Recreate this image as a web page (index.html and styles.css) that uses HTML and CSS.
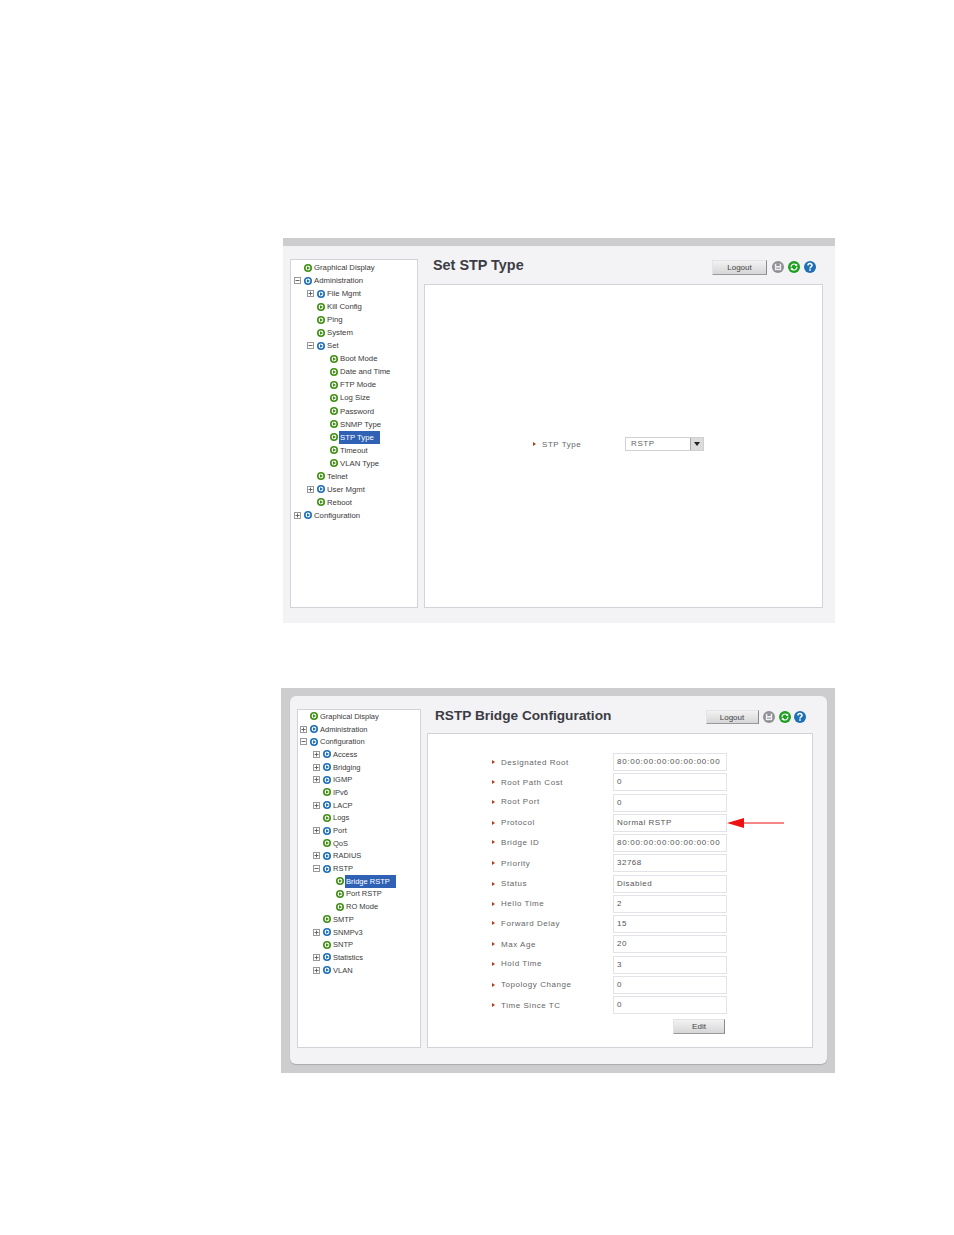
FILE: index.html
```html
<!DOCTYPE html>
<html lang="en">
<head>
  <meta charset="UTF-8">
  <meta name="viewport" content="width=device-width, initial-scale=1.0">
  <title>Set STP Type / RSTP Bridge Configuration</title>
  <link rel="stylesheet" href="styles.css">
</head>
<body>
  <!-- shared icons -->
  <svg class="icon-defs" width="0" height="0">
    <symbol id="leaf" viewBox="0 0 8 8">
      <circle cx="4" cy="4" r="4" fill="#3f8f14"/>
      <circle cx="4" cy="4" r="2.4" fill="#fff"/>
      <path d="M3 2.2L6 4 3 5.8z" fill="#3f8f14"/>
    </symbol>
    <symbol id="node" viewBox="0 0 8 8">
      <circle cx="4" cy="4" r="4" fill="#1c6fb5"/>
      <circle cx="4" cy="4" r="2.4" fill="#fff"/>
      <path d="M3 2.2L6 4 3 5.8z" fill="#1c6fb5"/>
    </symbol>
    <symbol id="plus" viewBox="0 0 7 7">
      <rect x=".5" y=".5" width="6" height="6" fill="#fff" stroke="#999"/>
      <path d="M1.5 3.5h4M3.5 1.5v4" stroke="#666"/>
    </symbol>
    <symbol id="minus" viewBox="0 0 7 7">
      <rect x=".5" y=".5" width="6" height="6" fill="#fff" stroke="#999"/>
      <path d="M1.5 3.5h4" stroke="#666"/>
    </symbol>
    <symbol id="save" viewBox="0 0 12 12">
      <circle cx="6" cy="6" r="6" fill="#8f9094"/>
      <rect x="2.8" y="2.8" width="6.4" height="6.4" fill="#f0f0f0"/>
      <rect x="4.3" y="2.8" width="3.4" height="2.2" fill="#8f9094"/>
      <rect x="3.9" y="6.4" width="4.2" height="1.6" fill="#b5b5b8"/>
    </symbol>
    <symbol id="refresh" viewBox="0 0 12 12">
      <circle cx="6" cy="6" r="6" fill="#1f9e22"/>
      <path d="M3 6.2A3 3 0 0 1 8.2 4M9 5.8A3 3 0 0 1 3.8 8" fill="none" stroke="#fff" stroke-width="1.2"/>
      <path d="M9.2 2.6v2.5H6.8zM2.8 9.4V6.9h2.4z" fill="#fff"/>
    </symbol>
    <symbol id="help" viewBox="0 0 12 12">
      <circle cx="6" cy="6" r="6" fill="#1f6fb4"/>
      <path d="M4 4.6A2 2 0 0 1 8 4.5C8 6 6 5.8 6 7.4" fill="none" stroke="#fff" stroke-width="1.5"/>
      <rect x="5.2" y="8.2" width="1.6" height="1.6" fill="#fff"/>
    </symbol>
  </svg>

  <!-- Set STP Type -->
  <div class="shot shot-stp">
    <div class="panel">
      <div class="tree">
        <div class="tree-row"><span class="slot"></span><svg class="bullet"><use href="#leaf"/></svg><span class="tree-label">Graphical Display</span></div>
        <div class="tree-row"><svg class="slot"><use href="#minus"/></svg><svg class="bullet"><use href="#node"/></svg><span class="tree-label">Administration</span></div>
        <div class="tree-row l1"><svg class="slot"><use href="#plus"/></svg><svg class="bullet"><use href="#node"/></svg><span class="tree-label">File Mgmt</span></div>
        <div class="tree-row l1"><span class="slot"></span><svg class="bullet"><use href="#leaf"/></svg><span class="tree-label">Kill Config</span></div>
        <div class="tree-row l1"><span class="slot"></span><svg class="bullet"><use href="#leaf"/></svg><span class="tree-label">Ping</span></div>
        <div class="tree-row l1"><span class="slot"></span><svg class="bullet"><use href="#leaf"/></svg><span class="tree-label">System</span></div>
        <div class="tree-row l1"><svg class="slot"><use href="#minus"/></svg><svg class="bullet"><use href="#node"/></svg><span class="tree-label">Set</span></div>
        <div class="tree-row l2"><span class="slot"></span><svg class="bullet"><use href="#leaf"/></svg><span class="tree-label">Boot Mode</span></div>
        <div class="tree-row l2"><span class="slot"></span><svg class="bullet"><use href="#leaf"/></svg><span class="tree-label">Date and Time</span></div>
        <div class="tree-row l2"><span class="slot"></span><svg class="bullet"><use href="#leaf"/></svg><span class="tree-label">FTP Mode</span></div>
        <div class="tree-row l2"><span class="slot"></span><svg class="bullet"><use href="#leaf"/></svg><span class="tree-label">Log Size</span></div>
        <div class="tree-row l2"><span class="slot"></span><svg class="bullet"><use href="#leaf"/></svg><span class="tree-label">Password</span></div>
        <div class="tree-row l2"><span class="slot"></span><svg class="bullet"><use href="#leaf"/></svg><span class="tree-label">SNMP Type</span></div>
        <div class="tree-row l2"><span class="slot"></span><svg class="bullet"><use href="#leaf"/></svg><span class="tree-label selected">STP Type</span></div>
        <div class="tree-row l2"><span class="slot"></span><svg class="bullet"><use href="#leaf"/></svg><span class="tree-label">Timeout</span></div>
        <div class="tree-row l2"><span class="slot"></span><svg class="bullet"><use href="#leaf"/></svg><span class="tree-label">VLAN Type</span></div>
        <div class="tree-row l1"><span class="slot"></span><svg class="bullet"><use href="#leaf"/></svg><span class="tree-label">Telnet</span></div>
        <div class="tree-row l1"><svg class="slot"><use href="#plus"/></svg><svg class="bullet"><use href="#node"/></svg><span class="tree-label">User Mgmt</span></div>
        <div class="tree-row l1"><span class="slot"></span><svg class="bullet"><use href="#leaf"/></svg><span class="tree-label">Reboot</span></div>
        <div class="tree-row"><svg class="slot"><use href="#plus"/></svg><svg class="bullet"><use href="#node"/></svg><span class="tree-label">Configuration</span></div>
      </div>
      <div class="content">
        <div class="header">
          <h2>Set STP Type</h2>
          <div class="actions">
            <button class="btn">Logout</button>
            <svg class="action-icon"><use href="#save"/></svg>
            <svg class="action-icon"><use href="#refresh"/></svg>
            <svg class="action-icon"><use href="#help"/></svg>
          </div>
        </div>
        <div class="main main-center">
          <div class="field">
            <span class="marker"></span>
            <span class="field-label field-label-short">STP Type</span>
            <div class="select"><span class="select-value">RSTP</span><span class="select-arrow"></span></div>
          </div>
        </div>
      </div>
    </div>
  </div>

  <!-- RSTP Bridge Configuration -->
  <div class="shot shot-rstp">
    <div class="panel">
      <div class="tree">
        <div class="tree-row"><span class="slot"></span><svg class="bullet"><use href="#leaf"/></svg><span class="tree-label">Graphical Display</span></div>
        <div class="tree-row"><svg class="slot"><use href="#plus"/></svg><svg class="bullet"><use href="#node"/></svg><span class="tree-label">Administration</span></div>
        <div class="tree-row"><svg class="slot"><use href="#minus"/></svg><svg class="bullet"><use href="#node"/></svg><span class="tree-label">Configuration</span></div>
        <div class="tree-row l1"><svg class="slot"><use href="#plus"/></svg><svg class="bullet"><use href="#node"/></svg><span class="tree-label">Access</span></div>
        <div class="tree-row l1"><svg class="slot"><use href="#plus"/></svg><svg class="bullet"><use href="#node"/></svg><span class="tree-label">Bridging</span></div>
        <div class="tree-row l1"><svg class="slot"><use href="#plus"/></svg><svg class="bullet"><use href="#node"/></svg><span class="tree-label">IGMP</span></div>
        <div class="tree-row l1"><span class="slot"></span><svg class="bullet"><use href="#leaf"/></svg><span class="tree-label">IPv6</span></div>
        <div class="tree-row l1"><svg class="slot"><use href="#plus"/></svg><svg class="bullet"><use href="#node"/></svg><span class="tree-label">LACP</span></div>
        <div class="tree-row l1"><span class="slot"></span><svg class="bullet"><use href="#leaf"/></svg><span class="tree-label">Logs</span></div>
        <div class="tree-row l1"><svg class="slot"><use href="#plus"/></svg><svg class="bullet"><use href="#node"/></svg><span class="tree-label">Port</span></div>
        <div class="tree-row l1"><span class="slot"></span><svg class="bullet"><use href="#leaf"/></svg><span class="tree-label">QoS</span></div>
        <div class="tree-row l1"><svg class="slot"><use href="#plus"/></svg><svg class="bullet"><use href="#node"/></svg><span class="tree-label">RADIUS</span></div>
        <div class="tree-row l1"><svg class="slot"><use href="#minus"/></svg><svg class="bullet"><use href="#node"/></svg><span class="tree-label">RSTP</span></div>
        <div class="tree-row l2"><span class="slot"></span><svg class="bullet"><use href="#leaf"/></svg><span class="tree-label selected">Bridge RSTP</span></div>
        <div class="tree-row l2"><span class="slot"></span><svg class="bullet"><use href="#leaf"/></svg><span class="tree-label">Port RSTP</span></div>
        <div class="tree-row l2"><span class="slot"></span><svg class="bullet"><use href="#leaf"/></svg><span class="tree-label">RO Mode</span></div>
        <div class="tree-row l1"><span class="slot"></span><svg class="bullet"><use href="#leaf"/></svg><span class="tree-label">SMTP</span></div>
        <div class="tree-row l1"><svg class="slot"><use href="#plus"/></svg><svg class="bullet"><use href="#node"/></svg><span class="tree-label">SNMPv3</span></div>
        <div class="tree-row l1"><span class="slot"></span><svg class="bullet"><use href="#leaf"/></svg><span class="tree-label">SNTP</span></div>
        <div class="tree-row l1"><svg class="slot"><use href="#plus"/></svg><svg class="bullet"><use href="#node"/></svg><span class="tree-label">Statistics</span></div>
        <div class="tree-row l1"><svg class="slot"><use href="#plus"/></svg><svg class="bullet"><use href="#node"/></svg><span class="tree-label">VLAN</span></div>
      </div>
      <div class="content">
        <div class="header">
          <h2>RSTP Bridge Configuration</h2>
          <div class="actions">
            <button class="btn">Logout</button>
            <svg class="action-icon"><use href="#save"/></svg>
            <svg class="action-icon"><use href="#refresh"/></svg>
            <svg class="action-icon"><use href="#help"/></svg>
          </div>
        </div>
        <div class="main main-form">
          <div class="field"><span class="marker"></span><span class="field-label">Designated Root</span><div class="value value-mac">80:00:00:00:00:00:00:00</div></div>
          <div class="field"><span class="marker"></span><span class="field-label">Root Path Cost</span><div class="value">0</div></div>
          <div class="field up"><span class="marker"></span><span class="field-label">Root Port</span><div class="value">0</div></div>
          <div class="field"><span class="marker"></span><span class="field-label">Protocol</span><div class="value">Normal RSTP</div>
            <svg class="callout" width="57" height="10" viewBox="0 0 57 10"><path d="M0 5L17 0V4.4H57V5.6H17V10z" fill="#ee1111"/></svg>
          </div>
          <div class="field up"><span class="marker"></span><span class="field-label">Bridge ID</span><div class="value value-mac">80:00:00:00:00:00:00:00</div></div>
          <div class="field"><span class="marker"></span><span class="field-label">Priority</span><div class="value">32768</div></div>
          <div class="field"><span class="marker"></span><span class="field-label">Status</span><div class="value">Disabled</div></div>
          <div class="field"><span class="marker"></span><span class="field-label">Hello Time</span><div class="value">2</div></div>
          <div class="field up"><span class="marker"></span><span class="field-label">Forward Delay</span><div class="value">15</div></div>
          <div class="field"><span class="marker"></span><span class="field-label">Max Age</span><div class="value">20</div></div>
          <div class="field up"><span class="marker"></span><span class="field-label">Hold Time</span><div class="value">3</div></div>
          <div class="field"><span class="marker"></span><span class="field-label">Topology Change</span><div class="value">0</div></div>
          <div class="field"><span class="marker"></span><span class="field-label">Time Since TC</span><div class="value">0</div></div>
          <div class="form-actions"><button class="btn btn-edit">Edit</button></div>
        </div>
      </div>
    </div>
  </div>
</body>
</html>
```

FILE: styles.css
```css
* {
  box-sizing: border-box;
}

body {
  margin: 0;
  padding: 238px 0 0;
  font-family: "Liberation Sans", Arial, sans-serif;
  font-size: 8px;
  background-color: #fff;
  color: #333;
}

.icon-defs {
  display: block;
  height: 0;
}

/* screenshots */
.shot {
  height: 385px;
}

.shot-stp {
  width: 552px;
  margin-left: 283px;
  border-top: 8px solid #cdcdcf;
  background: #f3f3f6;
}

.shot-rstp {
  width: 554px;
  margin: 65px 0 0 281px;
  padding: 8px 8px 9px 9px;
  background: #cdcdcf;
}

.panel {
  display: flex;
  height: 100%;
  background: #f3f3f6;
}

.shot-stp .panel {
  gap: 6px;
  padding: 13px 12px 15px 7px;
}

.shot-rstp .panel {
  gap: 6px;
  padding: 13px 14px 16px 7px;
  border-radius: 6px;
  box-shadow: 0 1px 1px #aaa;
}

/* tree */
.tree {
  flex: none;
  background: #fff;
  border: 1px solid #d2d2d8;
}

.shot-stp .tree {
  width: 128px;
  padding: 1px 0 0 3px;
  font-size: 7.75px;
  --row: 13.05px;
}

.shot-rstp .tree {
  width: 124px;
  padding: 0 0 0 2px;
  font-size: 7.5px;
  --row: 12.7px;
}

.tree-row {
  display: flex;
  align-items: center;
  height: var(--row);
  white-space: nowrap;
}

.tree-row.l1 {
  padding-left: 13px;
}

.tree-row.l2 {
  padding-left: 26px;
}

.slot {
  flex: none;
  width: 7px;
  height: 7px;
  margin-right: 3px;
}

.bullet {
  flex: none;
  width: 8px;
  height: 8px;
  margin-right: 2px;
}

.tree-label {
  color: #3a3a3a;
}

.tree-label.selected {
  height: 13px;
  padding: 0 6px 0 1px;
  margin-left: -1px;
  line-height: 13px;
  background: #2f62b5;
  color: #fff;
}

/* right side */
.content {
  display: flex;
  flex-direction: column;
}

.shot-stp .content {
  width: 399px;
}

.shot-rstp .content {
  width: 386px;
}

.header {
  display: flex;
  justify-content: space-between;
  flex: none;
  padding: 0 7px 0 9px;
}

.shot-stp .header {
  height: 25px;
}

.shot-rstp .header {
  height: 24px;
  padding: 0 7px 0 8px;
}

h2 {
  margin: 0;
  line-height: 13px;
  font-weight: bold;
  color: #3c3c44;
}

.shot-stp h2 {
  font-size: 14.4px;
}

.shot-rstp h2 {
  font-size: 13.65px;
}

.actions {
  display: flex;
  align-items: center;
  gap: 4px;
  height: 16px;
}

.shot-rstp .actions {
  gap: 3.5px;
}

.action-icon {
  width: 12px;
  height: 12px;
}

.btn {
  width: 55px;
  height: 15px;
  margin-right: 1px;
  padding: 0;
  font: 8px "Liberation Sans", Arial, sans-serif;
  color: #444;
  border: 1px solid #e4e4e4;
  border-right-color: #8a8a8e;
  border-bottom-color: #9a9a9e;
  background: linear-gradient(#f2f2f2, #d6d6d8);
}

.shot-rstp .btn {
  width: 53px;
  height: 14px;
}

.shot-rstp .btn-edit {
  width: 52px;
  height: 15px;
  margin: 0;
}

.main {
  flex: 1;
  background: #fff;
  border: 1px solid #d2d2d8;
}

.main-center {
  display: flex;
  align-items: center;
  justify-content: center;
  padding: 0 10px 4px 0;
}

.main-form {
  padding: 19px 0 0 64px;
}

/* form fields */
.field {
  display: flex;
  align-items: center;
}

.main-form .field {
  height: 18px;
  margin-bottom: 2.25px;
}

.field.up .field-label,
.field.up .marker {
  margin-bottom: 2px;
}

.marker {
  flex: none;
  width: 0;
  height: 0;
  margin-right: 6px;
  border-left: 3px solid #b5391b;
  border-top: 2.5px solid transparent;
  border-bottom: 2.5px solid transparent;
}

.field-label {
  width: 112px;
  color: #666;
  letter-spacing: 0.55px;
}

.field-label-short {
  width: 83px;
}

.value {
  width: 114px;
  height: 18px;
  padding-left: 3px;
  line-height: 16px;
  color: #555;
  letter-spacing: 0.5px;
  white-space: nowrap;
  border: 1px solid #e2e2e8;
  background: #fff;
}

.value-mac {
  letter-spacing: 0.72px;
}

.callout {
  flex: none;
}

.form-actions {
  display: flex;
  justify-content: flex-end;
  width: 233px;
  margin-top: 5px;
}

/* dropdown */
.select {
  display: flex;
  width: 79px;
  height: 14px;
  border: 1px solid #cfcfd4;
}

.select-value {
  flex: 1;
  padding-left: 5px;
  line-height: 12px;
  color: #666;
  letter-spacing: 0.6px;
}

.select-arrow {
  position: relative;
  width: 13px;
  background: #dcdcdc;
  border-left: 1px solid #aaa;
}

.select-arrow::after {
  content: '';
  position: absolute;
  left: 3px;
  top: 4px;
  border-left: 3px solid transparent;
  border-right: 3px solid transparent;
  border-top: 4px solid #222;
}
```
